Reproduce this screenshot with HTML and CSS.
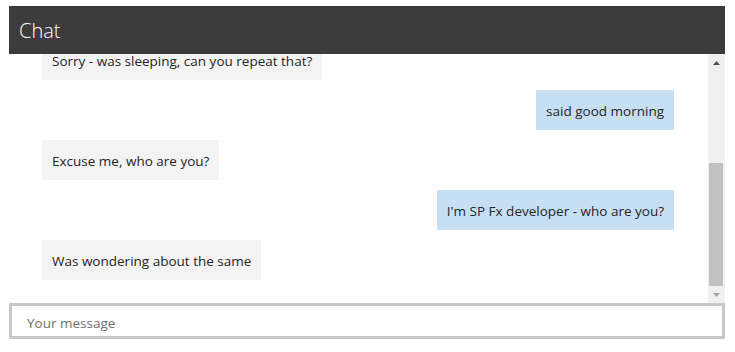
FILE: index.html
```html
<!DOCTYPE html>
<html lang="en">
  <head>
    <meta charset="UTF-8" />
    <title>Chat</title>
    <link rel="stylesheet" href="styles.css">
  </head>
  <body>
    <div class="chat">
      <header class="chat-header">Chat</header>

      <div class="chat-body">
        <div class="messages">
          <p class="msg msg-in">Sorry - was sleeping, can you repeat that?</p>
          <p class="msg msg-out">said good morning</p>
          <p class="msg msg-in">Excuse me, who are you?</p>
          <p class="msg msg-out">I'm SP Fx developer - who are you?</p>
          <p class="msg msg-in">Was wondering about the same</p>
        </div>

        <!-- fake scrollbar, the list is pinned to the bottom -->
        <div class="scrollbar">
          <div class="scroll-btn">
            <svg width="7" height="4" viewBox="0 0 7 4"><polygon points="0,4 3.5,0 7,4" fill="#505050" /></svg>
          </div>
          <div class="scroll-track">
            <div class="scroll-thumb"></div>
          </div>
          <div class="scroll-btn">
            <svg width="7" height="4" viewBox="0 0 7 4"><polygon points="0,0 7,0 3.5,4" fill="#a3a3a3" /></svg>
          </div>
        </div>
      </div>

      <input class="chat-input" type="text" placeholder="Your message">
    </div>
  </body>
</html>
```

FILE: styles.css
```css
*,
*::before,
*::after {
  margin: 0;
  padding: 0;
  box-sizing: border-box;
}

:root {
  --header-bg: #3c3c3c;
  --in-bg: #f3f3f3;
  --out-bg: #c7dff3;
  --text: #252525;
  --border: #c8c8c8;
}

body {
  font-family: "Open Sans", "Noto Sans", sans-serif;
  color: var(--text);
  background-color: #ffffff;
}

.chat {
  width: 716px;
  margin: 6px 0 0 9px;
}

.chat-header {
  display: flex;
  align-items: center;
  height: 48px;
  padding-left: 10px;
  background-color: var(--header-bg);
  color: #ffffff;
  font-size: 20px;
  font-weight: 300;
}

.chat-body {
  display: flex;
  height: 249px;
}

.messages {
  flex: 1;
  overflow: hidden;
  display: flex;
  flex-direction: column;
  justify-content: flex-end;
  gap: 10px;
  padding: 0 34px 23px 33px;
}

.msg {
  padding: 11px 10px 9px;
  font-size: 13.5px;
  line-height: 20px;
  white-space: nowrap;
}

.msg-in {
  align-self: flex-start;
  background-color: var(--in-bg);
}

.msg-out {
  align-self: flex-end;
  background-color: var(--out-bg);
}

/* Scrollbar */
.scrollbar {
  width: 17px;
  display: flex;
  flex-direction: column;
  background-color: #f0f0f0;
}

.scroll-btn {
  height: 17px;
  display: flex;
  align-items: center;
  justify-content: center;
}

.scroll-track {
  flex: 1;
  display: flex;
  flex-direction: column;
  justify-content: flex-end;
}

.scroll-thumb {
  height: 123px;
  margin: 0 2px 0 1px;
  background-color: #c1c1c1;
}

.chat-input {
  display: block;
  width: 100%;
  height: 36px;
  padding: 3px 0 0 15px;
  border: 3px solid var(--border);
  font-family: inherit;
  font-size: 13.5px;
  color: var(--text);
  outline: none;
}

.chat-input::placeholder {
  color: #6e6e6e;
}
```
